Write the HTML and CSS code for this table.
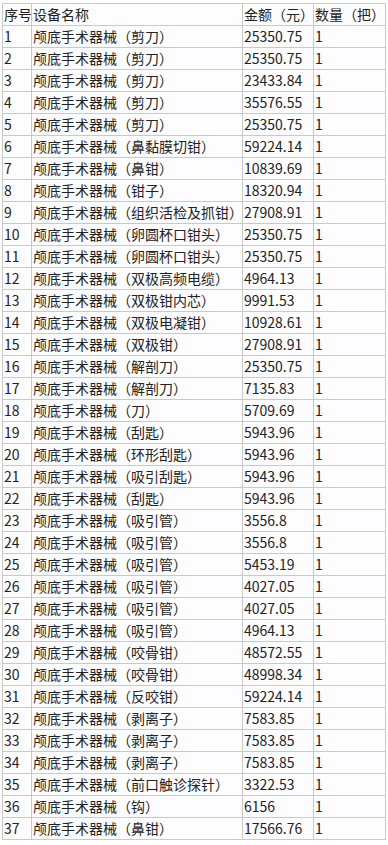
FILE: index.html
```html
<!DOCTYPE html>
<html lang="zh-CN">
<head>
<meta charset="utf-8">
<link rel="stylesheet" href="styles.css">
</head>
<body>
<table class="grid">
<colgroup><col class="c1"><col class="c2"><col class="c3"><col class="c4"></colgroup>
<tr><td>序号</td><td>设备名称</td><td>金额（元）</td><td>数量（把）</td></tr>
<tr><td>1</td><td>颅底手术器械（剪刀）</td><td>25350.75</td><td>1</td></tr>
<tr><td>2</td><td>颅底手术器械（剪刀）</td><td>25350.75</td><td>1</td></tr>
<tr><td>3</td><td>颅底手术器械（剪刀）</td><td>23433.84</td><td>1</td></tr>
<tr><td>4</td><td>颅底手术器械（剪刀）</td><td>35576.55</td><td>1</td></tr>
<tr><td>5</td><td>颅底手术器械（剪刀）</td><td>25350.75</td><td>1</td></tr>
<tr><td>6</td><td>颅底手术器械（鼻黏膜切钳）</td><td>59224.14</td><td>1</td></tr>
<tr><td>7</td><td>颅底手术器械（鼻钳）</td><td>10839.69</td><td>1</td></tr>
<tr><td>8</td><td>颅底手术器械（钳子）</td><td>18320.94</td><td>1</td></tr>
<tr><td>9</td><td>颅底手术器械（组织活检及抓钳）</td><td>27908.91</td><td>1</td></tr>
<tr><td>10</td><td>颅底手术器械（卵圆杯口钳头）</td><td>25350.75</td><td>1</td></tr>
<tr><td>11</td><td>颅底手术器械（卵圆杯口钳头）</td><td>25350.75</td><td>1</td></tr>
<tr><td>12</td><td>颅底手术器械（双极高频电缆）</td><td>4964.13</td><td>1</td></tr>
<tr><td>13</td><td>颅底手术器械（双极钳内芯）</td><td>9991.53</td><td>1</td></tr>
<tr><td>14</td><td>颅底手术器械（双极电凝钳）</td><td>10928.61</td><td>1</td></tr>
<tr><td>15</td><td>颅底手术器械（双极钳）</td><td>27908.91</td><td>1</td></tr>
<tr><td>16</td><td>颅底手术器械（解剖刀）</td><td>25350.75</td><td>1</td></tr>
<tr><td>17</td><td>颅底手术器械（解剖刀）</td><td>7135.83</td><td>1</td></tr>
<tr><td>18</td><td>颅底手术器械（刀）</td><td>5709.69</td><td>1</td></tr>
<tr><td>19</td><td>颅底手术器械（刮匙）</td><td>5943.96</td><td>1</td></tr>
<tr><td>20</td><td>颅底手术器械（环形刮匙）</td><td>5943.96</td><td>1</td></tr>
<tr><td>21</td><td>颅底手术器械（吸引刮匙）</td><td>5943.96</td><td>1</td></tr>
<tr><td>22</td><td>颅底手术器械（刮匙）</td><td>5943.96</td><td>1</td></tr>
<tr><td>23</td><td>颅底手术器械（吸引管）</td><td>3556.8</td><td>1</td></tr>
<tr><td>24</td><td>颅底手术器械（吸引管）</td><td>3556.8</td><td>1</td></tr>
<tr><td>25</td><td>颅底手术器械（吸引管）</td><td>5453.19</td><td>1</td></tr>
<tr><td>26</td><td>颅底手术器械（吸引管）</td><td>4027.05</td><td>1</td></tr>
<tr><td>27</td><td>颅底手术器械（吸引管）</td><td>4027.05</td><td>1</td></tr>
<tr><td>28</td><td>颅底手术器械（吸引管）</td><td>4964.13</td><td>1</td></tr>
<tr><td>29</td><td>颅底手术器械（咬骨钳）</td><td>48572.55</td><td>1</td></tr>
<tr><td>30</td><td>颅底手术器械（咬骨钳）</td><td>48998.34</td><td>1</td></tr>
<tr><td>31</td><td>颅底手术器械（反咬钳）</td><td>59224.14</td><td>1</td></tr>
<tr><td>32</td><td>颅底手术器械（剥离子）</td><td>7583.85</td><td>1</td></tr>
<tr><td>33</td><td>颅底手术器械（剥离子）</td><td>7583.85</td><td>1</td></tr>
<tr><td>34</td><td>颅底手术器械（剥离子）</td><td>7583.85</td><td>1</td></tr>
<tr><td>35</td><td>颅底手术器械（前口触诊探针）</td><td>3322.53</td><td>1</td></tr>
<tr><td>36</td><td>颅底手术器械（钩）</td><td>6156</td><td>1</td></tr>
<tr><td>37</td><td>颅底手术器械（鼻钳）</td><td>17566.76</td><td>1</td></tr>
</table>
</body>
</html>
```

FILE: styles.css
```css
html, body {
  margin: 0;
  padding: 0;
  background: #ffffff;
}
body {
  padding: 3px 0 0 2px;
  font-family: "Noto Sans CJK SC", "Noto Sans", sans-serif;
  font-size: 14px;
  color: #222;
}
.grid {
  border-collapse: collapse;
  table-layout: fixed;
  width: 383px;
  background: #fdfdff;
}
.c1 { width: 29px; }
.c2 { width: 211px; }
.c3 { width: 71px; }
.c4 { width: 72px; }
.grid td {
  border: 1px solid #c9c9c9;
  height: 21px;
  padding: 0 0 0 1px;
  line-height: 21px;
  white-space: nowrap;
  overflow: hidden;
  vertical-align: middle;
  box-sizing: border-box;
}
```
